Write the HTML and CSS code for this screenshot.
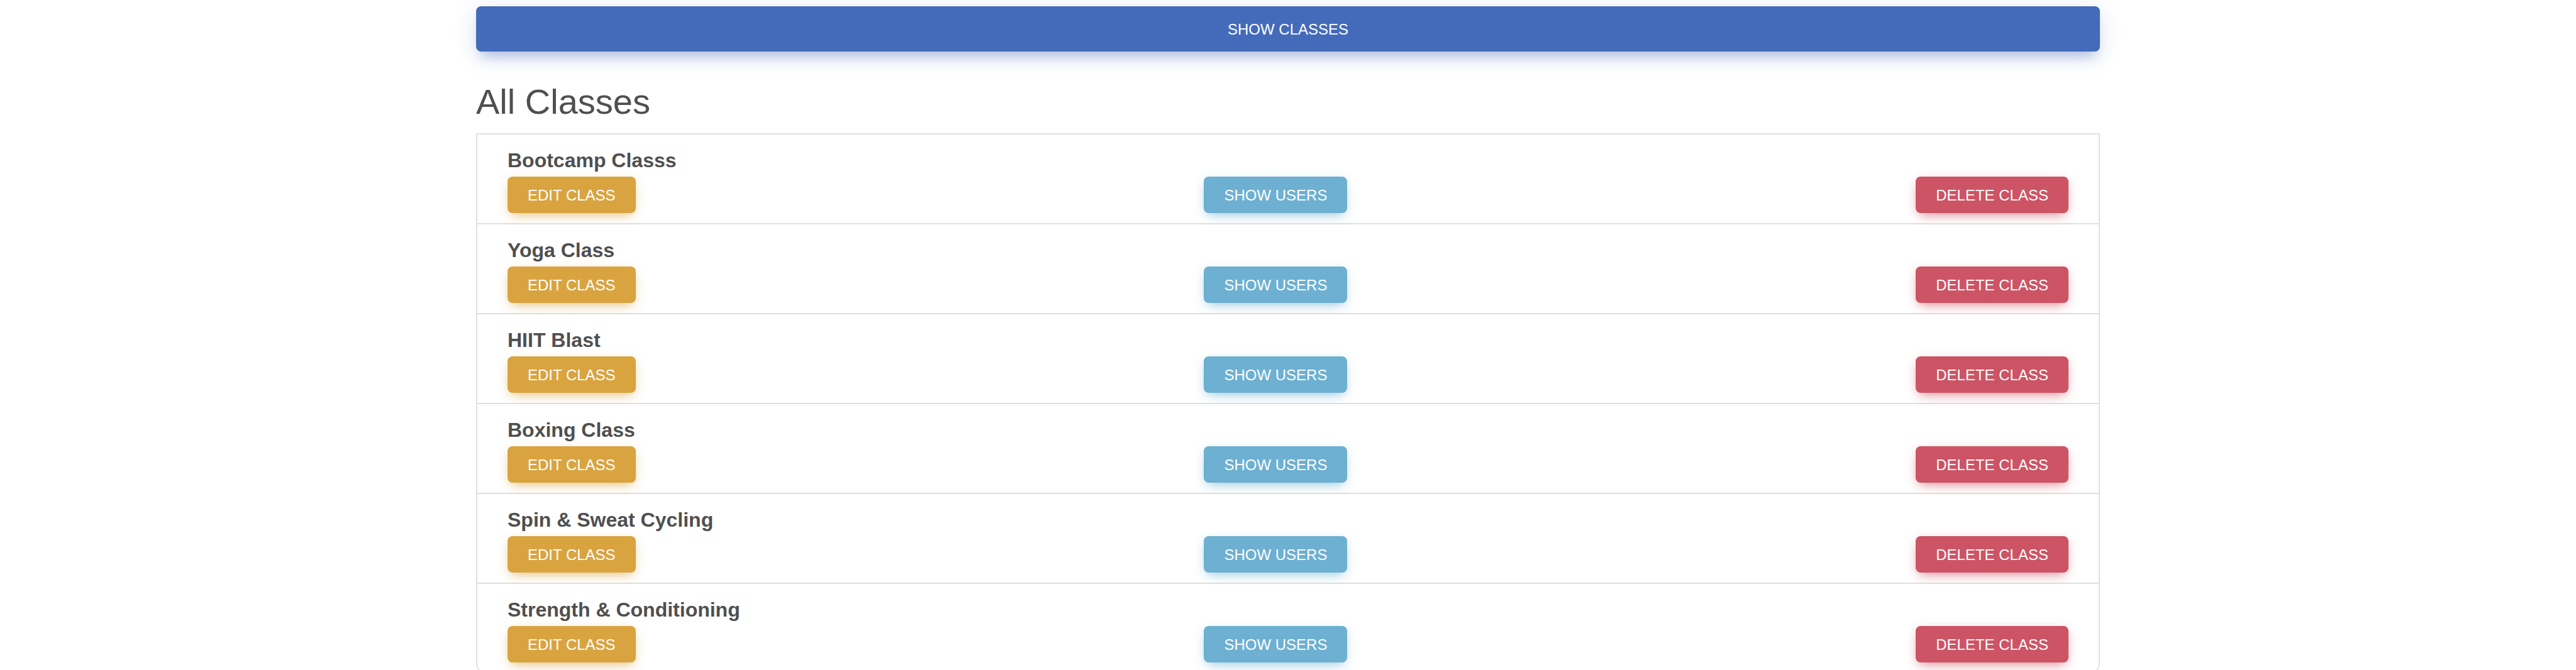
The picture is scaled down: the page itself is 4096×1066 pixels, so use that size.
FILE: index.html
```html
<!DOCTYPE html>
<html lang="en">
<head>
<meta charset="utf-8">
<meta name="viewport" content="width=device-width, initial-scale=1">
<title>All Classes</title>
<link rel="stylesheet" href="styles.css">
</head>
<body>
<main class="container">
  <button type="button" class="btn btn-primary btn-block">Show Classes</button>
  <h1 class="page-title">All Classes</h1>
  <ul class="class-list">
    <li class="class-item">
      <h2 class="class-name">Bootcamp Classs</h2>
      <div class="actions">
        <button type="button" class="btn btn-warning">Edit Class</button>
        <button type="button" class="btn btn-info">Show Users</button>
        <button type="button" class="btn btn-danger">Delete Class</button>
      </div>
    </li>
    <li class="class-item">
      <h2 class="class-name">Yoga Class</h2>
      <div class="actions">
        <button type="button" class="btn btn-warning">Edit Class</button>
        <button type="button" class="btn btn-info">Show Users</button>
        <button type="button" class="btn btn-danger">Delete Class</button>
      </div>
    </li>
    <li class="class-item">
      <h2 class="class-name">HIIT Blast</h2>
      <div class="actions">
        <button type="button" class="btn btn-warning">Edit Class</button>
        <button type="button" class="btn btn-info">Show Users</button>
        <button type="button" class="btn btn-danger">Delete Class</button>
      </div>
    </li>
    <li class="class-item">
      <h2 class="class-name">Boxing Class</h2>
      <div class="actions">
        <button type="button" class="btn btn-warning">Edit Class</button>
        <button type="button" class="btn btn-info">Show Users</button>
        <button type="button" class="btn btn-danger">Delete Class</button>
      </div>
    </li>
    <li class="class-item">
      <h2 class="class-name">Spin &amp; Sweat Cycling</h2>
      <div class="actions">
        <button type="button" class="btn btn-warning">Edit Class</button>
        <button type="button" class="btn btn-info">Show Users</button>
        <button type="button" class="btn btn-danger">Delete Class</button>
      </div>
    </li>
    <li class="class-item">
      <h2 class="class-name">Strength &amp; Conditioning</h2>
      <div class="actions">
        <button type="button" class="btn btn-warning">Edit Class</button>
        <button type="button" class="btn btn-info">Show Users</button>
        <button type="button" class="btn btn-danger">Delete Class</button>
      </div>
    </li>
  </ul>
</main>
</body>
</html>
```
FILE: styles.css
```css
* {
  box-sizing: border-box;
}

html {
  scrollbar-width: none;
}

body {
  margin: 0;
  background: #fff;
  color: #4f4f4f;
  font-family: "Liberation Sans", Arial, Helvetica, sans-serif;
}

.container {
  width: 100%;
  max-width: 2582px;
  margin: 0 auto;
  padding-top: 10px;
}

.btn {
  padding: 16px 32px 14px;
  border: 0;
  border-radius: 8px;
  color: #fff;
  font-family: inherit;
  font-size: 24px;
  line-height: 28px;
  text-transform: uppercase;
  cursor: pointer;
}

.btn-block {
  display: block;
  width: 100%;
  padding: 23px 32px 21px;
}

.btn-primary {
  background: #446bb9;
  box-shadow: 0 16px 18px -8px rgba(68, 107, 185, 0.3), 0 8px 36px 0 rgba(68, 107, 185, 0.2);
}

.btn-warning {
  background: #d9a43f;
  box-shadow: 0 8px 18px -8px rgba(217, 164, 63, 0.7), 0 4px 18px 0 rgba(217, 164, 63, 0.2);
}

.btn-info {
  background: #6db0d1;
  box-shadow: 0 8px 18px -8px rgba(109, 176, 209, 0.7), 0 4px 18px 0 rgba(109, 176, 209, 0.2);
}

.btn-danger {
  background: #cc5465;
  box-shadow: 0 8px 18px -8px rgba(204, 84, 101, 0.7), 0 4px 18px 0 rgba(204, 84, 101, 0.2);
}

.page-title {
  margin: 46px 0 16px;
  font-size: 56px;
  font-weight: 400;
  line-height: 68px;
}

.class-list {
  margin: 0;
  padding: 0;
  border: 2px solid #e0e0e0;
  border-radius: 0 0 16px 16px;
  list-style: none;
}

.class-item {
  padding: 16px 48px;
  border-bottom: 2px solid #e0e0e0;
}

.class-item:last-child {
  border-bottom: 0;
}

.class-name {
  margin: 0;
  font-size: 32px;
  font-weight: 700;
  line-height: 51px;
}

.actions {
  display: flex;
  justify-content: space-between;
}
```
